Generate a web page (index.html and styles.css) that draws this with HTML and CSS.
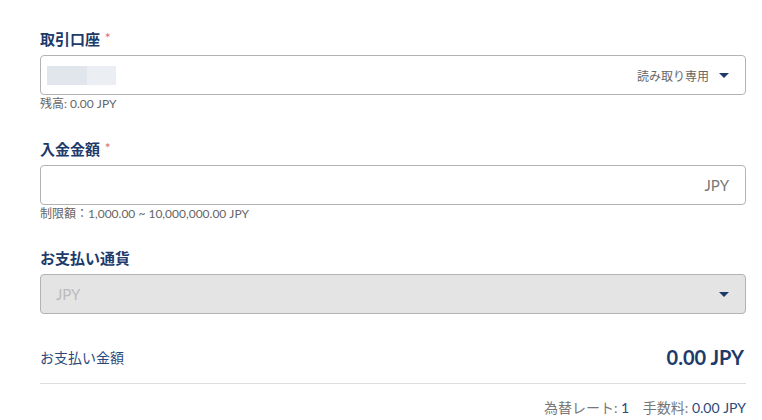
FILE: index.html
```html
<!DOCTYPE html>
<html lang="ja">

<head>
	<title>入金</title>
	<meta charset="utf-8" />
	<link rel="stylesheet" href="styles.css">
</head>

<body>
	<div class="depositForm">
		<div class="field">
			<div class="label">取引口座 <span class="req">*</span></div>
			<div class="box">
				<div class="mask">
					<span class="mask1"></span><span class="mask2"></span>
				</div>
				<span class="readonly">読み取り専用</span>
				<span class="caret"></span>
			</div>
			<div class="help">残高: 0.00 JPY</div>
		</div>

		<div class="field">
			<div class="label">入金金額 <span class="req">*</span></div>
			<div class="box">
				<span class="unit">JPY</span>
			</div>
			<div class="help">制限額：1,000.00 ~ 10,000,000.00 JPY</div>
		</div>

		<div class="field last">
			<div class="label">お支払い通貨</div>
			<div class="box disabled">
				<span class="value">JPY</span>
				<span class="caret"></span>
			</div>
		</div>

		<div class="total">
			<span class="totalLabel">お支払い金額</span>
			<span class="totalValue">0.00 JPY</span>
		</div>

		<div class="rate">
			為替レート: <span class="num">1</span>
			<span class="fee">手数料: <span class="num">0.00 JPY</span></span>
		</div>
	</div>
</body>

</html>
```

FILE: styles.css
```css
body {
	margin: 0;
	background: #fff;
	font-family: Lato, "Noto Sans CJK JP", sans-serif;
}

.depositForm {
	padding: 28px 16px 0 40px;
}

.field {
	margin-bottom: 26px;
}

.field.last {
	margin-bottom: 31px;
}

.label {
	font-size: 15px;
	line-height: 20px;
	font-weight: bold;
	color: #1d3a6b;
	margin-bottom: 6px;
}

.label .req {
	color: #e06b6b;
	font-weight: normal;
	font-size: 14px;
	vertical-align: 2px;
	margin-left: 1px;
}

.box {
	height: 40px;
	box-sizing: border-box;
	border: 1px solid #b3b3b3;
	border-radius: 4px;
	display: flex;
	align-items: center;
	justify-content: flex-end;
	padding: 0 16px 0 15px;
	background: #fff;
}

.box.disabled {
	background: #e4e4e4;
	justify-content: space-between;
}

.mask {
	display: flex;
	margin-right: auto;
	margin-left: -9px;
}

.mask span {
	display: block;
	height: 19px;
}

.mask1 {
	width: 40px;
	background: #e1e5ec;
}

.mask2 {
	width: 29px;
	background: #ebeef3;
}

.readonly {
	font-size: 12px;
	color: #666;
	margin-right: 10px;
}

.caret {
	width: 0;
	height: 0;
	border-left: 5px solid transparent;
	border-right: 5px solid transparent;
	border-top: 5px solid #1d3a6b;
	margin-top: 1px;
}

.unit {
	font-size: 15px;
	color: #777;
}

.value {
	font-size: 15px;
	color: #bbb;
}

.help {
	font-size: 12px;
	line-height: 16px;
	color: #666;
	margin-top: 1px;
}

.total {
	display: flex;
	justify-content: space-between;
	align-items: center;
	height: 24px;
	padding-bottom: 14px;
	border-bottom: 1px solid #dddddd;
}

.totalLabel {
	font-size: 14px;
	color: #2c4a7c;
}

.totalValue {
	font-size: 20px;
	font-weight: bold;
	color: #1d3a6b;
	margin-right: 2px;
}

.rate {
	margin-top: 15px;
	text-align: right;
	font-size: 14px;
	line-height: 18px;
	color: #777;
}

.rate .num {
	color: #2c4a7c;
}

.rate .fee {
	margin-left: 10px;
}
```
